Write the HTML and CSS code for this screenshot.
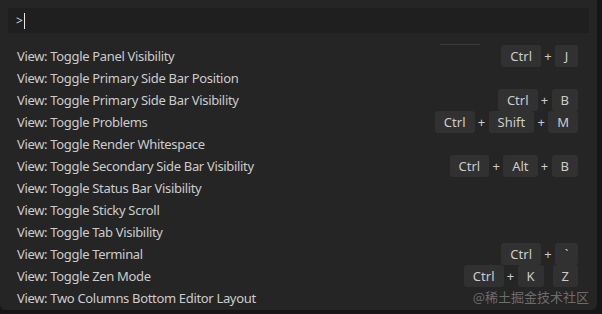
FILE: index.html
```html
<!DOCTYPE html>
<html lang="en">
<head>
    <meta charset="UTF-8">
    <title>Command Palette</title>
    <link rel="stylesheet" href="styles.css">
</head>
<body>
    <div class="palette">
        <div class="input-box">
            <span class="prompt">&gt;</span><span class="caret"></span>
        </div>

        <div class="list">
            <div class="row">
                <span class="label">View: Toggle Panel Visibility</span>
                <span class="keys"><kbd>Ctrl</kbd><i>+</i><kbd>J</kbd></span>
                <span class="divider"></span>
            </div>
            <div class="row">
                <span class="label">View: Toggle Primary Side Bar Position</span>
            </div>
            <div class="row">
                <span class="label">View: Toggle Primary Side Bar Visibility</span>
                <span class="keys"><kbd>Ctrl</kbd><i>+</i><kbd>B</kbd></span>
            </div>
            <div class="row">
                <span class="label">View: Toggle Problems</span>
                <span class="keys"><kbd>Ctrl</kbd><i>+</i><kbd>Shift</kbd><i>+</i><kbd>M</kbd></span>
            </div>
            <div class="row">
                <span class="label">View: Toggle Render Whitespace</span>
            </div>
            <div class="row">
                <span class="label">View: Toggle Secondary Side Bar Visibility</span>
                <span class="keys"><kbd>Ctrl</kbd><i>+</i><kbd>Alt</kbd><i>+</i><kbd>B</kbd></span>
            </div>
            <div class="row">
                <span class="label">View: Toggle Status Bar Visibility</span>
            </div>
            <div class="row">
                <span class="label">View: Toggle Sticky Scroll</span>
            </div>
            <div class="row">
                <span class="label">View: Toggle Tab Visibility</span>
            </div>
            <div class="row">
                <span class="label">View: Toggle Terminal</span>
                <span class="keys"><kbd>Ctrl</kbd><i>+</i><kbd>`</kbd></span>
            </div>
            <div class="row">
                <span class="label">View: Toggle Zen Mode</span>
                <span class="keys"><kbd>Ctrl</kbd><i>+</i><kbd>K</kbd><b class="chord"></b><kbd>Z</kbd></span>
            </div>
            <div class="row">
                <span class="label">View: Two Columns Bottom Editor Layout</span>
            </div>
        </div>

        <div class="watermark">@稀土掘金技术社区</div>
    </div>
</body>
</html>
```

FILE: styles.css
```css
body {
    margin: 0;
    background-color: #161616;
    font-family: "Noto Sans", "Open Sans", sans-serif;
    font-size: 13px;
    color: #cccccc;
}

.palette {
    position: relative;
    width: 597px;
    height: 310px;
    background-color: #252526;
    border-radius: 0 0 6px 6px;
    box-sizing: border-box;
    padding-top: 8px;
}

.input-box {
    margin: 0 8px 0 8px;
    height: 25px;
    background-color: #1f1f1f;
    display: flex;
    align-items: center;
    padding-left: 8px;
}

.prompt {
    color: #d4d4d4;
    font-size: 12px;
}

.caret {
    display: inline-block;
    width: 1px;
    height: 16px;
    background-color: #e8e8e8;
    margin-left: 1px;
}

.list {
    margin-top: 12px;
}

/* одна строка команды */
.row {
    position: relative;
    height: 22px;
    display: flex;
    align-items: center;
    justify-content: space-between;
    padding: 0 19px 0 17px;
}

.label {
    white-space: nowrap;
    letter-spacing: -0.33px;
}

.keys {
    display: flex;
    align-items: center;
}

kbd {
    font-family: inherit;
    font-size: 13px;
    color: #cccccc;
    background-color: #313131;
    border-radius: 3px;
    height: 22px;
    line-height: 22px;
    padding: 0 9px;
    min-width: 5px;
    text-align: center;
}

.keys i {
    font-style: normal;
    width: 14px;
    text-align: center;
    color: #cccccc;
}

.keys .chord {
    width: 9px;
}

.divider {
    position: absolute;
    top: -1px;
    left: 440px;
    width: 40px;
    height: 1px;
    background-color: #3a3a3a;
}

.watermark {
    position: absolute;
    right: 8px;
    bottom: 5px;
    line-height: 16px;
    font-family: "Noto Sans CJK SC", sans-serif;
    font-size: 13px;
    color: rgba(200, 200, 200, 0.45);
}
```
